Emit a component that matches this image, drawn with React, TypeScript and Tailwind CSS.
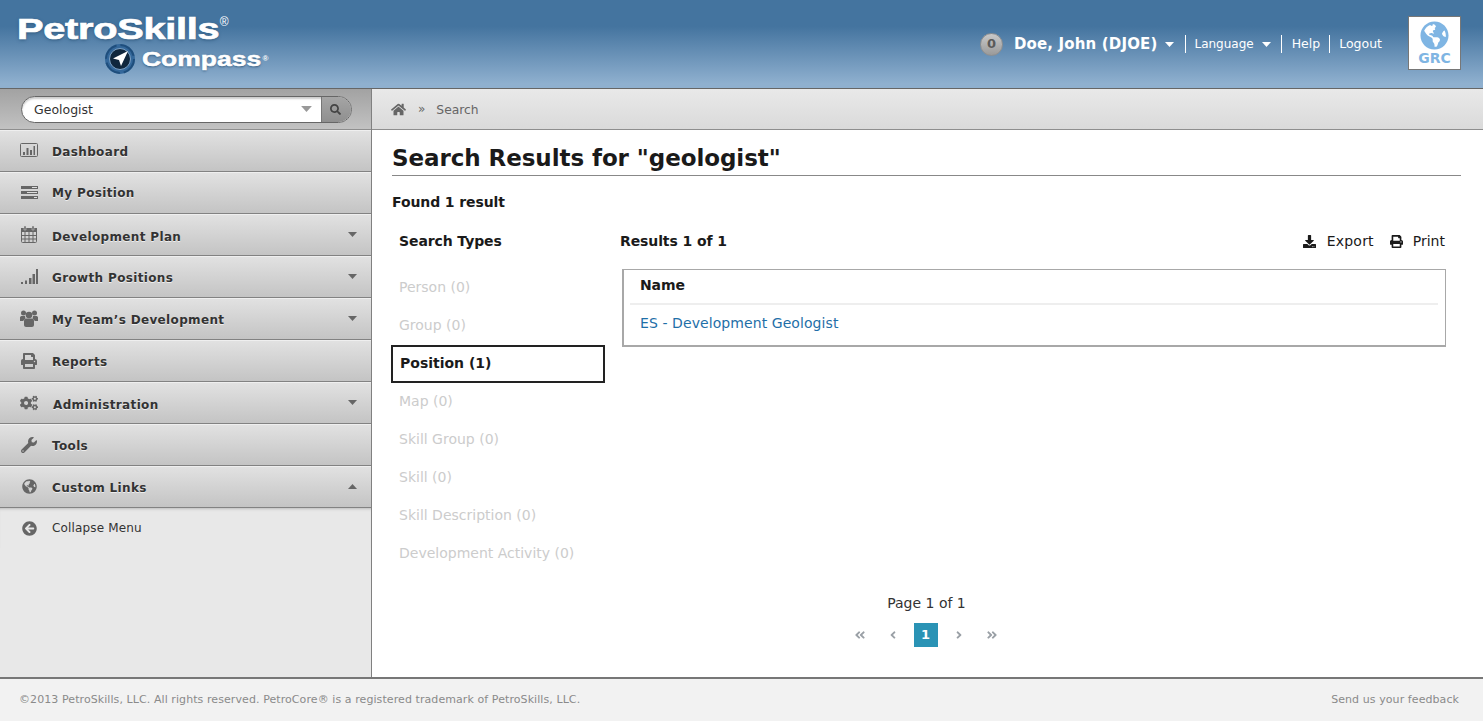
import { FaHome, FaPrint, FaWrench, FaCogs, FaGlobeAmericas, FaArrowCircleLeft, FaSearch, FaDownload, FaAngleDoubleLeft, FaAngleLeft, FaAngleRight, FaAngleDoubleRight } from "react-icons/fa";
import type { ReactNode } from "react";

const sans = "font-['DejaVu_Sans',Verdana,sans-serif]";

function Caret({ up = false, className = "" }: { up?: boolean; className?: string }) {
  return (
    <svg width="9" height="5" viewBox="0 0 9 5" className={className}>
      <path d={up ? "M0 5 L4.5 0 L9 5 Z" : "M0 0 L9 0 L4.5 5 Z"} fill="currentColor" />
    </svg>
  );
}

function DashIcon() {
  return (
    <svg width="18" height="15" viewBox="0 0 18 15">
      <rect x="0.5" y="0.5" width="17" height="13" rx="1" fill="none" stroke="#666" />
      <path d="M3 9h2v3H3zM6.500 5h2v7h-2zM10 7h2v5h-2zM13.500 3h1.500v9h-1.500z" fill="#666" />
    </svg>
  );
}

function PositionIcon() {
  return (
    <svg width="17" height="13" viewBox="0 0 17 13">
      <path d="M0 0h17v3H0zM0 5h17v3H0zM0 10h17v3H0z" fill="#666" />
      <path d="M11 1h5v1h-5zM6 6h10v1H6zM13 11h3v1h-3z" fill="#ddd" />
    </svg>
  );
}

function CalendarIcon() {
  return (
    <svg width="16" height="17" viewBox="0 0 16 17">
      <rect x="0.500" y="2.500" width="15" height="14" rx="1" fill="none" stroke="#666" />
      <path d="M0 2h16v4H0z" fill="#666" />
      <path d="M3 0h2v4H3zM11 0h2v4h-2z" fill="#666" stroke="#d6d6d6" strokeWidth="0.500" />
      <path d="M0.500 9.500h15M0.500 13h15M4 6v10M8 6v10M12 6v10" stroke="#666" fill="none" />
    </svg>
  );
}

function SignalIcon() {
  return (
    <svg width="17" height="15" viewBox="0 0 17 15">
      <path d="M0 13h2v2H0zM4 11.500h2v3.500H4zM8 9h2.500v6H8zM11.500 5h2.500v10h-2.500zM15 0h2v15h-2z" fill="#666" />
    </svg>
  );
}

function UsersIcon() {
  return (
    <svg width="18" height="17" viewBox="0 0 18 17">
      <circle cx="3.500" cy="3" r="2.500" fill="#666" />
      <circle cx="14.500" cy="3" r="2.500" fill="#666" />
      <circle cx="9" cy="5" r="3.300" fill="#666" />
      <path d="M0 7.500c0-1 1-1.500 2-1.500h3l.5 2.500-2.500 2.500H0zM18 7.500c0-1-1-1.500-2-1.500h-3l-.5 2.500 2.500 2.500h3z" fill="#666" />
      <path d="M4 11c0-1.500 1-2.500 2.500-2.500h5c1.500 0 2.500 1 2.500 2.500v4c0 1-1 2-2 2H6c-1 0-2-1-2-2z" fill="#666" />
    </svg>
  );
}

type NavItem = { label: string; icon: ReactNode; caret?: "up" | "down"; offset: string };

const navItems: NavItem[] = [
  { label: "Dashboard", icon: <DashIcon />, offset: "pt-[2px]" },
  { label: "My Position", icon: <PositionIcon />, offset: "pt-0" },
  { label: "Development Plan", icon: <CalendarIcon />, caret: "down", offset: "pt-[5px]" },
  { label: "Growth Positions", icon: <SignalIcon />, caret: "down", offset: "pt-[3px]" },
  { label: "My Team’s Development", icon: <UsersIcon />, caret: "down", offset: "pt-[3px]" },
  { label: "Reports", icon: <FaPrint size={16} />, offset: "pt-[3px]" },
  { label: "Administration", icon: <FaCogs size={18} />, caret: "down", offset: "ml-px pt-[5px]" },
  { label: "Tools", icon: <FaWrench size={16} />, offset: "pt-[3px]" },
  { label: "Custom Links", icon: <FaGlobeAmericas size={15} />, caret: "up", offset: "pt-[3px]" },
];

const searchTypes = [
  { label: "Person (0)" },
  { label: "Group (0)" },
  { label: "Position (1)", active: true },
  { label: "Map (0)" },
  { label: "Skill Group (0)" },
  { label: "Skill (0)" },
  { label: "Skill Description (0)" },
  { label: "Development Activity (0)" },
];

function Logo() {
  return (
    <div className="flex flex-col pl-[17px] pt-[12px] font-['Liberation_Sans',Arial,sans-serif] font-bold text-white">
      <div className="flex h-[31px] items-start">
        <span className="origin-left scale-x-[1.37] text-[29px] leading-[34px] tracking-[-0.2px] [-webkit-text-stroke:0.7px_white] [text-shadow:0_1px_3px_#2b5478]">PetroSkills</span>
        <span className="ml-[55px] mt-[4px] text-[12px] font-normal leading-[12px]">®</span>
      </div>
      <div className="ml-[87px] flex items-center">
        <svg width="32" height="32" viewBox="0 0 32 32">
          <circle cx="16" cy="16" r="15" fill="#34689b" />
          <circle cx="16" cy="16" r="14" fill="none" stroke="#1f4e7c" strokeWidth="2" strokeDasharray="18 4" />
          <circle cx="16" cy="16" r="10.500" fill="#10273d" stroke="#7ea3c6" strokeWidth="1" />
          <path d="M24 8 L9 15.500 L15 17 L17 23 Z" fill="#fff" />
        </svg>
        <span className="ml-[6px] origin-left scale-x-[1.26] text-[21px] leading-[24px] [-webkit-text-stroke:0.5px_white] [text-shadow:0_1px_2px_#2b5478]">Compass</span>
        <span className="ml-[26px] text-[8px] leading-[8px]">®</span>
      </div>
    </div>
  );
}

function UserBar() {
  return (
    <div className="flex items-center pr-[22px] text-white">
      <div className="mt-[2px] flex items-center">
        <span className="flex h-[23px] w-[23px] items-center justify-center rounded-full border border-[#8f8f8f] bg-gradient-to-b from-[#c9c9c9] to-[#9a9a9a] text-[13px] font-bold text-[#5a5a5a]">0</span>
        <span className="ml-[11px] text-[15px] font-bold tracking-[0.15px]">Doe, John (DJOE)</span>
        <Caret className="ml-[8px]" />
        <span className="ml-[11px] h-[18px] w-px bg-white" />
        <span className="ml-[8px] text-[12px]">Language</span>
        <Caret className="ml-[8px]" />
        <span className="ml-[10px] h-[18px] w-px bg-white" />
        <span className="ml-[10px] text-[12.500px]">Help</span>
        <span className="ml-[9px] h-[18px] w-px bg-white" />
        <span className="ml-[9px] mr-[26px] text-[12.500px]">Logout</span>
      </div>
      <div className="flex h-[54px] w-[53px] flex-col items-center border border-[#777] bg-white pt-[4px] text-[#7fb5e3]">
        <FaGlobeAmericas size={29} />
        <span className="mt-[1px] text-[14px] font-bold leading-[15px]">GRC</span>
      </div>
    </div>
  );
}

function Sidebar() {
  return (
    <aside className="flex w-[372px] shrink-0 flex-col border-r border-[#808080] bg-[#e8e8e8]">
      <div className="flex h-[41px] shrink-0 items-center border-b border-[#8e8e8e] bg-gradient-to-b from-[#a2a2a2] to-[#c2c2c2] pl-[21px]">
        <div className="flex h-[27px] w-[331px] overflow-hidden rounded-full border border-[#666] bg-white shadow-[inset_0_2px_2px_#ccc]">
          <span className="flex-1 pl-[12px] text-[12.500px] leading-[26px] text-[#333]">Geologist</span>
          <span className="flex items-center pr-[9px] text-[#999]"><Caret className="h-[6px] w-[11px]" /></span>
          <span className="flex w-[30px] items-center justify-center border-l border-[#777] bg-gradient-to-b from-[#a5a5a5] to-[#8f8f8f] pr-[2px] text-[#444]">
            <FaSearch size={11} />
          </span>
        </div>
      </div>
      {navItems.map((item) => (
        <div
          key={item.label}
          className="flex h-[42px] shrink-0 items-center border-b border-[#828282] bg-gradient-to-b from-[#e2e2e2] to-[#c4c4c4] pr-[14px] text-[#333] shadow-[inset_0_1px_0_#efefef]"
        >
          <span className="flex w-[52px] shrink-0 justify-center pl-[14px] pr-[8px] text-[#666]">{item.icon}</span>
          <span className={`flex-1 text-[12px] font-bold tracking-[0.35px] [text-shadow:0_1px_0_#eee] ${item.offset}`}>{item.label}</span>
          {item.caret && <Caret up={item.caret === "up"} className="text-[#666]" />}
        </div>
      ))}
      <div className="flex h-[40px] items-center text-[#333] [box-shadow:inset_0_3px_3px_-2px_#bbb]">
        <span className="flex w-[52px] shrink-0 justify-center pl-[14px] pr-[8px] text-[#666]"><FaArrowCircleLeft size={15} /></span>
        <span className="text-[12px] tracking-[0.15px]">Collapse Menu</span>
      </div>
    </aside>
  );
}

function Pager() {
  return (
    <div className="mt-[21px] flex flex-col items-center pr-[2px] text-[#333]">
      <div className="ml-[2px] text-[14px] leading-[18px]">Page 1 of 1</div>
      <div className="mt-[11px] flex items-center text-[#9aa0a6]">
        <span className="flex w-[24px] justify-center"><FaAngleDoubleLeft size={12} /></span>
        <span className="ml-[9px] flex w-[24px] justify-center"><FaAngleLeft size={12} /></span>
        <span className="ml-[9px] flex h-[24px] w-[24px] items-center justify-center bg-[#2a93b5] text-[13px] font-bold text-white">1</span>
        <span className="ml-[9px] flex w-[24px] justify-center"><FaAngleRight size={12} /></span>
        <span className="ml-[9px] flex w-[24px] justify-center"><FaAngleDoubleRight size={12} /></span>
      </div>
    </div>
  );
}

function Main() {
  return (
    <main className="flex min-w-0 flex-1 flex-col bg-white">
      <div className="flex h-[41px] shrink-0 items-center border-b border-[#8e8e8e] bg-gradient-to-b from-[#e9e9e9] to-[#dadada] pl-[19px] text-[#666]">
        <FaHome size={15} />
        <span className="ml-[12px] text-[12px] text-[#666]">»</span>
        <span className="ml-[11px] pt-[2px] text-[12.300px]">Search</span>
      </div>
      <div className="flex flex-1 flex-col pl-[20px] pr-[22px]">
        <h1 className="mt-[12px] h-[34px] border-b border-[#888] text-[23px] font-bold leading-[33px] tracking-[-0.07px] text-[#1a1a1a]">Search Results for "geologist"</h1>
        <div className="mt-[17px] text-[14px] font-bold leading-[18px] tracking-[-0.1px] text-[#1a1a1a]">Found 1 result</div>
        <div className="mt-[21px] flex">
          <div className="w-[213px] shrink-0">
            <div className="pl-[7px] text-[14px] font-bold leading-[18px] tracking-[-0.1px] text-[#1a1a1a]">Search Types</div>
            <div className="mt-[19px] flex flex-col">
              {searchTypes.map((type) => (
                <div
                  key={type.label}
                  className={`flex h-[38px] items-center pb-[1px] text-[14px] ${type.active ? "-ml-px border-2 border-[#222] pl-[7px] font-bold text-[#1a1a1a]" : "pl-[7px] text-[#ccc]"}`}
                >
                  {type.label}
                </div>
              ))}
            </div>
          </div>
          <div className="ml-[15px] flex-1 pr-[16px]">
            <div className="flex h-[18px] items-center text-[14px] text-[#1a1a1a]">
              <span className="flex-1 font-bold tracking-[-0.1px]">Results 1 of 1</span>
              <FaDownload size={13} className="mr-[11px]" />
              <span className="tracking-[0.2px]">Export</span>
              <FaPrint size={13} className="ml-[16px] mr-[10px]" />
              <span>Print</span>
            </div>
            <div className="-mr-px ml-[2px] mt-[19px] h-[78px] border border-b-2 border-l-2 border-[#a8a8a8] pl-[6px] pr-[7px]">
              <div className="flex h-[35px] items-center border-b-2 border-[#eee] px-[10px] pb-[2px] text-[14px] font-bold tracking-[-0.1px] text-[#1a1a1a]">Name</div>
              <div className="flex h-[37px] items-center px-[10px] text-[14px] tracking-[0.08px] text-[#1f6fa8]">ES - Development Geologist</div>
            </div>
          </div>
        </div>
        <Pager />
      </div>
    </main>
  );
}

export default function App() {
  return (
    <div className={`flex h-[721px] w-[1483px] flex-col overflow-hidden ${sans}`}>
      <header className="flex h-[89px] shrink-0 items-start justify-between border-b border-[#666] bg-gradient-to-b from-[#44749f] from-30% to-[#8fb0cf] to-95%">
        <Logo />
        <div className="pt-[16px]"><UserBar /></div>
      </header>
      <div className="flex min-h-0 flex-1">
        <Sidebar />
        <Main />
      </div>
      <footer className="flex h-[44px] shrink-0 items-center justify-between border-t-2 border-[#777] bg-[#f2f2f2] pl-[19px] pr-[24px] pt-[1px] text-[11px] tracking-[0.08px] text-[#8a8a8a]">
        <span>©2013 PetroSkills, LLC. All rights reserved. PetroCore® is a registered trademark of PetroSkills, LLC.</span>
        <span>Send us your feedback</span>
      </footer>
    </div>
  );
}
